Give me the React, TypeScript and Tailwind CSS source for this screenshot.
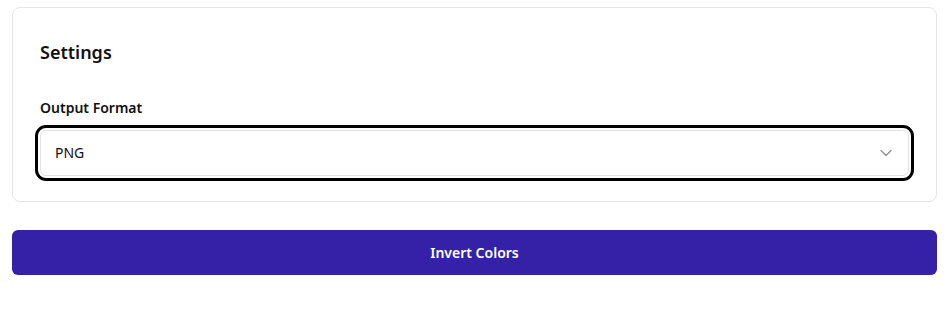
import { ChevronDown } from "lucide-react";

export default function App() {
  return (
    <div className="min-h-screen bg-white px-3 pt-[7px] font-['Noto_Sans',_sans-serif] text-[#111]">
      <section className="rounded-lg border border-[#e5e5e5] bg-white px-[27px] pt-[30px] pb-[25px]">
        <h2 className="text-lg leading-7 font-semibold">Settings</h2>
        <label className="mt-[32px] mb-3 block text-sm leading-5 font-semibold">Output Format</label>
        <div className="relative rounded-md border border-[#e2e2e2] outline-[3px] outline-black outline-offset-2 outline-solid">
          <div className="flex h-[44px] items-center justify-between pr-3 pl-3.5 text-sm">
            <span>PNG</span>
            <ChevronDown className="h-5 w-5 text-[#8f8f8f]" strokeWidth={1.5} />
          </div>
        </div>
      </section>
      <button className="mt-7 flex h-[45px] w-full items-center justify-center rounded-md bg-[#3421a8] text-sm font-semibold text-white">
        Invert Colors
      </button>
    </div>
  );
}
